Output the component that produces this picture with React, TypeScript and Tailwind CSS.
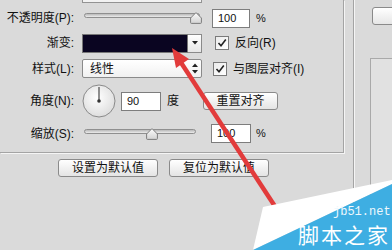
const ui = "font-['Liberation_Sans','Noto_Sans_CJK_SC',sans-serif] text-[12px] text-[#111]";

function Label({ children }: { children: React.ReactNode }) {
  return <div className="w-[74px] shrink-0 text-right leading-none">{children}</div>;
}

function Thumb() {
  return (
    <svg width="12" height="12" viewBox="0 0 12 12">
      <defs>
        <linearGradient id="thumbFill" x1="0" y1="0" x2="0" y2="1">
          <stop offset="0" stopColor="#fdfdfd" />
          <stop offset="1" stopColor="#d2d2d2" />
        </linearGradient>
      </defs>
      <path d="M6 0.6 L11.4 6 L11.4 10.6 Q11.4 11.4 10.6 11.4 L1.4 11.4 Q0.6 11.4 0.6 10.6 L0.6 6 Z" fill="url(#thumbFill)" stroke="#7c7c7c" strokeWidth="1" />
    </svg>
  );
}

function Slider({ width, thumb }: { width: number; thumb: number }) {
  return (
    <div className="relative h-full shrink-0" style={{ width }}>
      <div className="absolute left-0 right-0 top-[5px] h-[5px] rounded-full border border-[#8f8f8f] bg-gradient-to-b from-[#b9b9b9] to-[#ececec]" />
      <div className="absolute top-[4px]" style={{ left: thumb }}>
        <Thumb />
      </div>
    </div>
  );
}

function Field({ value, width }: { value: string; width: number }) {
  return (
    <div
      className="flex h-[19px] shrink-0 items-center border border-[#7d7d7d] bg-white pl-[5px] text-[11px] leading-none"
      style={{ width }}
    >
      {value}
    </div>
  );
}

function Check({ label }: { label: React.ReactNode }) {
  return (
    <div className="ml-[13px] flex items-center">
      <div className="flex h-[14px] w-[14px] items-center justify-center border border-[#7a7a7a] bg-gradient-to-br from-[#ebebeb] to-white">
        <svg width="10" height="10" viewBox="0 0 10 10">
          <path d="M1.5 5 L4 7.8 L8.8 1.6" fill="none" stroke="#222" strokeWidth="1.6" />
        </svg>
      </div>
      <span className="ml-[6px] leading-none">{label}</span>
    </div>
  );
}

function Button({ text, width }: { text: string; width: number }) {
  return (
    <div
      className="flex h-[18px] shrink-0 items-center justify-center rounded-[3px] border border-[#8a8a8a] bg-gradient-to-b from-white to-[#e4e4e4] leading-none"
      style={{ width }}
    >
      {text}
    </div>
  );
}

function Dial() {
  return (
    <svg width="34" height="34" viewBox="0 0 34 34" className="shrink-0">
      <defs>
        <radialGradient id="dialFill" cx="0.45" cy="0.4" r="0.7">
          <stop offset="0" stopColor="#ffffff" />
          <stop offset="1" stopColor="#d8d8d8" />
        </radialGradient>
      </defs>
      <circle cx="17" cy="17" r="16" fill="url(#dialFill)" stroke="#8a8a8a" />
      <line x1="17" y1="17" x2="17" y2="3" stroke="#555" strokeWidth="1.3" />
      <circle cx="17" cy="17" r="1.8" fill="#333" />
    </svg>
  );
}

export default function App() {
  return (
    <div className={`relative flex h-[250px] w-[392px] overflow-hidden bg-[#dadada] ${ui}`}>
      {/* left: gradient overlay options */}
      <div className="w-[344px] shrink-0">
        <div className="h-[153px] border-b border-r border-[#a4a4a4] shadow-[1px_1px_0_#f5f5f5]">
          <div className="ml-[82px] h-[3px] w-[120px] border-x border-b border-[#939393] bg-[#f2f2f2]" />

          <div className="mt-[5px] flex h-[20px] items-center">
            <Label>不透明度(P):</Label>
            <div className="ml-[10px] h-full">
              <Slider width={116} thumb={106} />
            </div>
            <div className="ml-[12px]">
              <Field value="100" width={38} />
            </div>
            <span className="ml-[6px] text-[11px] leading-none">%</span>
          </div>

          <div className="mt-[5px] flex h-[20px] items-center">
            <Label>渐变:</Label>
            <div className="ml-[8px] flex">
              <div className="h-[19px] w-[106px] border border-[#777] bg-[#0a0521]" />
              <div className="flex h-[19px] w-[14px] items-center justify-center border border-l-0 border-[#8a8a8a] bg-gradient-to-b from-white to-[#e6e6e6]">
                <svg width="6" height="4" viewBox="0 0 6 4">
                  <path d="M0 0 H6 L3 3.5 Z" fill="#222" />
                </svg>
              </div>
            </div>
            <Check label="反向(R)" />
          </div>

          <div className="mt-[6px] flex h-[19px] items-center">
            <Label>样式(L):</Label>
            <div className="ml-[8px] flex h-[19px] w-[120px] items-center justify-between rounded-[2px] border border-[#8a8a8a] bg-gradient-to-b from-white to-[#f1f1f1] pl-[7px] pr-[3px] leading-none">
              <span>线性</span>
              <svg width="6" height="11" viewBox="0 0 6 11">
                <path d="M0 4 L3 0.5 L6 4 Z M0 7 L3 10.5 L6 7 Z" fill="#222" />
              </svg>
            </div>
            <div className="-ml-[2px]">
              <Check label="与图层对齐(I)" />
            </div>
          </div>

          <div className="mt-[6px] flex h-[34px] items-center">
            <Label>角度(N):</Label>
            <div className="ml-[8px]">
              <Dial />
            </div>
            <div className="ml-[5px]">
              <Field value="90" width={40} />
            </div>
            <span className="ml-[6px] leading-none">度</span>
            <div className="ml-[24px]">
              <Button text="重置对齐" width={75} />
            </div>
          </div>

          <div className="mt-[6px] flex h-[19px] items-center">
            <Label>缩放(S):</Label>
            <div className="ml-[10px] h-full">
              <Slider width={112} thumb={62} />
            </div>
            <div className="ml-[15px]">
              <Field value="100" width={40} />
            </div>
            <span className="ml-[5px] text-[11px] leading-none">%</span>
          </div>
        </div>

        <div className="ml-[58px] mt-[6px] flex gap-[11px]">
          <Button text="设置为默认值" width={100} />
          <Button text="复位为默认值" width={100} />
        </div>
      </div>

      {/* divider */}
      <div className="ml-[9px] w-px shrink-0 bg-[#a4a4a4]" />
      <div className="w-px shrink-0 bg-[#f5f5f5]" />

      {/* right: dialog side buttons and preview */}
      <div className="flex flex-1 flex-col pl-[15px]">
        <div className="ml-[2px] mt-[7px] h-[18px] w-[40px] rounded-[3px] border border-[#8a8a8a] bg-gradient-to-b from-white to-[#e6e6e6]" />
        <div className="mt-[33px] flex-1 border-l border-t border-[#a9a9a9] bg-[#e1e1e1]" />
      </div>

      {/* red arrow and site watermark lie over the dialog */}
      <svg className="pointer-events-none absolute inset-0" width="392" height="250" viewBox="0 0 392 250">
        <line x1="178" y1="58" x2="278" y2="211" stroke="#e23b3b" strokeWidth="4.5" />
        <polygon points="172,48 189,59 176,68" fill="#e23b3b" />
        <polygon points="263,207 392,180 392,184 253,250" fill="#ffffff" />
        <polygon points="392,184 253,250 392,250" fill="#3eaee2" />
      </svg>
      <span className="absolute left-[333px] top-[206px] font-['Liberation_Mono',monospace] text-[12px] leading-none text-[#eef8fd]">
        jb51.net
      </span>
      <span className="absolute left-[298px] top-[224px] font-['Noto_Sans_CJK_SC',sans-serif] text-[21px] leading-none tracking-[2px] text-white">
        脚本之家
      </span>
    </div>
  );
}
